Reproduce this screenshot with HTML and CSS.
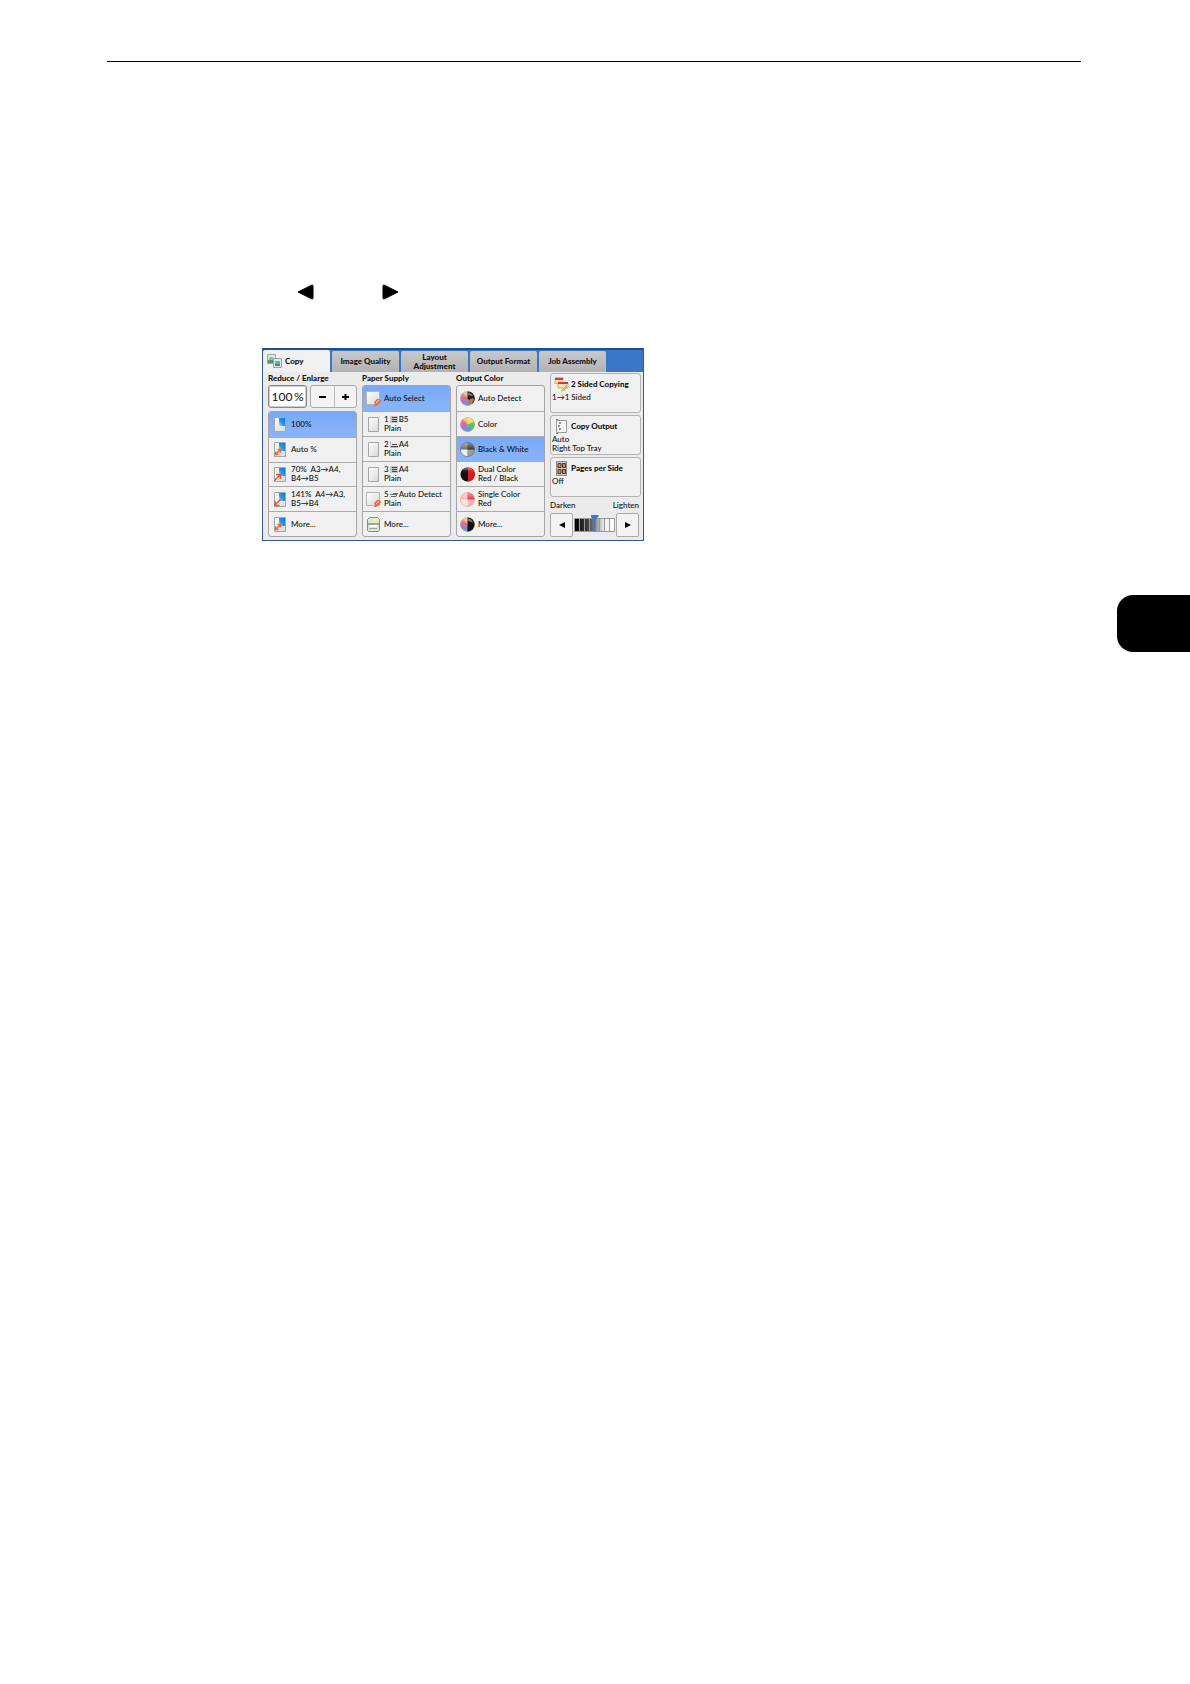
FILE: index.html
```html
<!DOCTYPE html>
<html lang="en">
<head>
<meta charset="utf-8">
<meta name="viewport" content="width=device-width, initial-scale=1">
<title>Copy</title>
<link rel="stylesheet" href="styles.css">
</head>
<body>
<svg class="defs" aria-hidden="true">
  <defs>
    <linearGradient id="blue" x1="1" y1="0" x2="0" y2="1"><stop offset="0" stop-color="#0877cf"/><stop offset=".6" stop-color="#2b9ae8"/><stop offset="1" stop-color="#cfeafc"/></linearGradient>
    <linearGradient id="sheet" x1="0" y1="0" x2="1" y2="1"><stop offset="0" stop-color="#fff"/><stop offset="1" stop-color="#d9d9d9"/></linearGradient>
    <linearGradient id="shine" x1="0" y1="0" x2="0" y2="1"><stop offset="0" stop-color="#fff" stop-opacity=".5"/><stop offset=".5" stop-color="#fff" stop-opacity=".05"/><stop offset="1" stop-color="#fff" stop-opacity="0"/></linearGradient>
    <symbol id="page" viewBox="0 0 12 15"><path d="M.5.5h11v14H.5z" fill="url(#sheet)" stroke="#a3a7aa"/><path d="M5 1h6v8H5z" fill="url(#blue)"/></symbol>
    <symbol id="scale" viewBox="0 0 12 15"><use href="#page"/><path d="M2 12l4-4M3.500 7.500h3v3M1.500 9.500v3h3" fill="none" stroke="#ee6435" stroke-width="1.500"/></symbol>
    <symbol id="reduce" viewBox="0 0 12 15"><use href="#page"/><path d="M0 14l6-6M2 7.500h4.500V12" fill="none" stroke="#ee5435" stroke-width="1.500"/></symbol>
    <symbol id="enlarge" viewBox="0 0 12 15"><use href="#page"/><path d="M7 7l-6 6M1 9v4.500h4.500" fill="none" stroke="#ee5435" stroke-width="1.500"/></symbol>
    <symbol id="blank" viewBox="0 0 15 15"><path d="M2.500.5h10v14h-10z" fill="url(#sheet)" stroke="#a3a7aa"/></symbol>
    <symbol id="autopaper" viewBox="0 0 15 15"><path d="M.5.5h13v13H.5z" fill="url(#sheet)" stroke="#b5b5b5"/><path d="M8 11l3-3h3l1 2-2 3-3 2H8l1-2z" fill="#ef6a42"/><path d="M10 12l3-3" stroke="#ffd6c4" fill="none"/></symbol>
    <symbol id="trays" viewBox="0 0 15 15"><path d="M1.500 2.500l2-2h8l2 2v11l-1 1h-10l-1-1z" fill="#dce6d7" stroke="#819084"/><path d="M7 1h5v5H7z" fill="#f2edac"/><path d="M2 6h11v2H2zM3 11h8v1H3z" fill="#93ac9c"/><path d="M4 8h7v2H4z" fill="#fff"/></symbol>
    <symbol id="wheel" viewBox="0 0 15 15"><circle cx="7.500" cy="7.500" r="7" fill="#f3a63a"/><path d="M7.500 7.500V.5A7 7 0 0 1 14 5z" fill="#e7d23a"/><path d="M7.500 7.500L14 5a7 7 0 0 1-2 8z" fill="#52c35a"/><path d="M7.500 7.500L12 13a7 7 0 0 1-8 .5z" fill="#4f9ee0"/><path d="M7.500 7.500L4 13.500A7 7 0 0 1 .5 7z" fill="#b26ad0"/><path d="M7.500 7.500L.5 7A7 7 0 0 1 3 2z" fill="#ee5560"/><circle cx="7.500" cy="7.500" r="7" fill="url(#shine)" stroke="#aaa" stroke-width=".5"/></symbol>
    <symbol id="wheelauto" viewBox="0 0 15 15"><use href="#wheel"/><path d="M7.500.5a7 7 0 0 1 5 12l-5-5z" fill="#17191b"/><path d="M8 12l2-4 3-1 1 2-2 3-3 2z" fill="#e96439"/><path d="M8 1.500c2 0 4 1 5 4L8 4z" fill="#777"/></symbol>
    <symbol id="wheelmore" viewBox="0 0 15 15"><use href="#wheel"/><path d="M7.500.5a7 7 0 0 1 0 14z" fill="#111"/><path d="M8 1.500c2 0 4 1 5 4L8 4z" fill="#777"/></symbol>
    <symbol id="mono" viewBox="0 0 15 15"><circle cx="7.500" cy="7.500" r="7" fill="#666"/><path d="M7.500 7.500h7a7 7 0 0 1-7 7z" fill="#999"/><path d="M7.500 7.500h-7a7 7 0 0 0 7 7z" fill="#eee"/><path d="M7.500.5v7h7a7 7 0 0 0-7-7z" fill="#292c2f"/><circle cx="7.500" cy="7.500" r="7" fill="url(#shine)" stroke="#666" stroke-width=".5"/></symbol>
    <symbol id="dual" viewBox="0 0 15 15"><circle cx="7.500" cy="7.500" r="7" fill="#101010"/><path d="M8 .5a7 7 0 0 1 0 14z" fill="#d91c20"/><ellipse cx="7.500" cy="4" rx="5" ry="3" fill="url(#shine)"/></symbol>
    <symbol id="single" viewBox="0 0 15 15"><circle cx="7.500" cy="7.500" r="7" fill="#f5b4b4"/><path d="M7.500 7.500V.5a7 7 0 0 1 7 7z" fill="#df3338"/><path d="M.5 7.500h7v7a7 7 0 0 1-7-7z" fill="#fbe5e5"/><circle cx="7.500" cy="7.500" r="7" fill="url(#shine)" stroke="#d88" stroke-width=".5"/></symbol>
    <symbol id="tall" viewBox="0 0 8 7"><path d="M0 0h8v7H0z" fill="#c4c4c4"/><path d="M2 1.500h5M2 3.500h5M2 5.500h5" stroke="#444"/></symbol>
    <symbol id="wide" viewBox="0 0 8 7"><path d="M.5 0v6.500H8" fill="none" stroke="#bbb"/><path d="M2 3.500h5M1 5.500h7" stroke="#444"/></symbol>
    <symbol id="bypass" viewBox="0 0 8 7"><path d="M3 2.500h5M1 5.500h5l1-2H3M0 3.500h3" fill="none" stroke="#666"/></symbol>
  </defs>
</svg>

<header class="page-head"><hr class="rule"></header>
<main class="content">
  <div class="arrows">
    <svg width="17" height="16" viewBox="0 0 17 16" role="img" aria-label="Previous"><path d="M1 8L15 1Q16 1 16 2v12q0 1-1 1z" stroke="#000"/></svg>
    <svg width="17" height="16" viewBox="0 0 17 16" role="img" aria-label="Next"><path d="M16 8L2 1Q1 1 1 2v12q0 1 1 1z" stroke="#000"/></svg>
  </div>

  <section class="panel">
    <nav class="tabs">
      <button class="tab tab-on"><svg width="15" height="14" viewBox="0 0 15 14" aria-hidden="true"><path d="M.5.500h8v9h-8z" fill="#dfe7df" stroke="#9aaa9e"/><path d="M1 6h7v3H1z" fill="#58985e"/><path d="M2 3h4v3H2z" fill="#8fb9c8"/><path d="M6.500 4.500h8v9h-8z" fill="#e2eaf0" stroke="#88a1a1"/><path d="M8 7h5v5H8z" fill="#69a7cf"/><path d="M8 10h5v2H8z" fill="#4b8d47"/></svg>Copy</button>
      <button class="tab">Image Quality</button>
      <button class="tab">Layout<br>Adjustment</button>
      <button class="tab">Output Format</button>
      <button class="tab">Job Assembly</button>
    </nav>

    <div class="body">
      <section class="col">
        <h2><label for="ratio">Reduce / Enlarge</label></h2>
        <div class="zoomer">
          <input id="ratio" class="ratio" type="text" value="100&#8201;%">
          <div class="stepper"><button aria-label="Less"><svg width="7" height="8" viewBox="0 0 7 8"><path d="M0 4h7" stroke="#000" stroke-width="2"/></svg></button><button aria-label="More"><svg width="7" height="8" viewBox="0 0 7 8"><path d="M0 4h7M3.500 1v6" stroke="#000" stroke-width="2"/></svg></button></div>
        </div>
        <div class="list">
          <button class="opt narrow on" aria-pressed="true"><svg><use href="#page"/></svg><span>100%</span></button>
          <button class="opt narrow"><svg><use href="#scale"/></svg><span>Auto %</span></button>
          <button class="opt narrow"><svg><use href="#reduce"/></svg><span>70%&nbsp; A3→A4,<br>B4→B5</span></button>
          <button class="opt narrow"><svg><use href="#enlarge"/></svg><span>141%&nbsp; A4→A3,<br>B5→B4</span></button>
          <button class="opt narrow"><svg><use href="#scale"/></svg><span>More...</span></button>
        </div>
      </section>

      <section class="col">
        <h2>Paper Supply</h2>
        <div class="list">
          <button class="opt on" aria-pressed="true"><svg><use href="#autopaper"/></svg><span>Auto Select</span></button>
          <button class="opt"><svg><use href="#blank"/></svg><span>1<svg class="tray"><use href="#tall"/></svg>B5<br>Plain</span></button>
          <button class="opt"><svg><use href="#blank"/></svg><span>2<svg class="tray"><use href="#wide"/></svg>A4<br>Plain</span></button>
          <button class="opt"><svg><use href="#blank"/></svg><span>3<svg class="tray"><use href="#tall"/></svg>A4<br>Plain</span></button>
          <button class="opt"><svg><use href="#autopaper"/></svg><span>5<svg class="tray"><use href="#bypass"/></svg>Auto Detect<br>Plain</span></button>
          <button class="opt"><svg><use href="#trays"/></svg><span>More...</span></button>
        </div>
      </section>

      <section class="col">
        <h2>Output Color</h2>
        <div class="list">
          <button class="opt"><svg><use href="#wheelauto"/></svg><span>Auto Detect</span></button>
          <button class="opt"><svg><use href="#wheel"/></svg><span>Color</span></button>
          <button class="opt on" aria-pressed="true"><svg><use href="#mono"/></svg><span>Black &amp; White</span></button>
          <button class="opt"><svg><use href="#dual"/></svg><span>Dual Color<br>Red / Black</span></button>
          <button class="opt"><svg><use href="#single"/></svg><span>Single Color<br>Red</span></button>
          <button class="opt"><svg><use href="#wheelmore"/></svg><span>More...</span></button>
        </div>
      </section>

      <section class="col side">
        <button class="card"><span class="card-title"><svg width="15" height="15" viewBox="0 0 15 15"><path d="M1 .500h8v6H1z" fill="#f2dfb3" stroke="#c9ba9b"/><path d="M1 1h8v2H1z" fill="#d73b35"/><path d="M4 6h10v5H4z" fill="#f6e6bd" stroke="#c5aa89"/><path d="M4 5h10v2H4z" fill="#d33b35"/><path d="M7 14l6-6-2 5z" fill="#e6cb42" stroke="#b6963e" stroke-width=".5"/></svg>2 Sided Copying</span><span class="card-text">1→1 Sided</span></button>
        <button class="card"><span class="card-title"><svg width="15" height="15" viewBox="0 0 15 15"><path d="M2.500 1.500h10v12h-10z" fill="#f4f4f4" stroke="#999"/><path d="M2 .5h2M2 14.500h2" stroke="#777"/><path d="M5 4h2M4 7h2M5 10h2" stroke="#333"/></svg>Copy Output</span><span class="card-text">Auto<br>Right Top Tray</span></button>
        <button class="card"><span class="card-title"><svg width="15" height="15" viewBox="0 0 15 15"><path d="M2.500.500h10v14h-10z" fill="#c8c8c8" stroke="#8a8a8a"/><path d="M4 2.500h3v4H4zM8.500 2.500h3v4h-3zM4 8.500h3v4H4zM8.500 8.500h3v4h-3z" fill="#d08a52" stroke="#443d39"/></svg>Pages per Side</span><span class="card-text">Off</span></button>
        <label class="ends" for="density"><span>Darken</span><span>Lighten</span></label>
        <div class="density">
          <button aria-label="Darken"><svg width="6" height="6" viewBox="0 0 6 6"><path d="M0 3l6-3v6z"/></svg></button>
          <input id="density" type="range" min="0" max="6" value="3">
          <button aria-label="Lighten"><svg width="6" height="6" viewBox="0 0 6 6"><path d="M6 3L0 0v6z"/></svg></button>
        </div>
      </section>
    </div>
  </section>
</main>
<aside class="thumb-tab" aria-label="Chapter"></aside>
</body>
</html>
```
FILE: styles.css
```css
* { box-sizing: border-box; }

body {
  margin: 0;
  min-height: 100vh;
  background: #fff;
  color: #111;
  font: 8px/9px Lato, "Open Sans", sans-serif;
}

.defs { position: absolute; width: 0; height: 0; }

button, input { font: inherit; color: inherit; margin: 0; padding: 0; border: 0; background: none; }
svg { flex: none; }

.page-head { padding: 61px 109px 0 107px; }
.rule { margin: 0; border: 0; height: 1px; background: #000; }

.content { padding: 222px 16px 0 262px; }
.arrows { display: flex; gap: 68px; padding-left: 35px; margin-bottom: 48px; }

.panel {
  max-width: 382px;
  border: 1px solid #35578f;
  border-top: 2px solid #254b8d;
  background: #3b76c8;
}

.tabs { display: grid; grid-template-columns: repeat(5, 67px); gap: 2px; height: 22px; }
.tab {
  display: flex;
  align-items: center;
  justify-content: center;
  gap: 2px;
  margin-top: 1px;
  border-radius: 2px 2px 0 0;
  background: linear-gradient(#c9c9c9, #b2b2b2);
  font-weight: 900;
}
.tab-on { justify-content: flex-start; gap: 3px; margin-top: 0; padding-left: 4px; background: #f1f1f1; }

.body {
  display: grid;
  grid-template-columns: repeat(3, 89px) minmax(0, 1fr);
  gap: 5px;
  padding: 1px 2px 3px 5px;
  background: #ebebeb;
}
.col { display: flex; flex-direction: column; height: 164px; }
h2 { margin: 0; height: 12px; font-size: 8px; line-height: 11px; font-weight: 900; white-space: nowrap; }

.zoomer { display: flex; justify-content: space-between; height: 23px; margin-bottom: 3px; }
.ratio {
  width: 39px;
  border: 1px solid #888;
  border-radius: 3px;
  box-shadow: inset 0 0 0 1px #ccc;
  background: #fff;
  font-size: 12px;
  text-align: center;
}
.stepper { display: grid; grid-template-columns: 1fr 1fr; width: 47px; border: 1px solid #aaa; border-radius: 3px; background: #f3f3f3; }
.stepper button { display: grid; place-items: center; }
.stepper button + button { border-left: 1px solid #bbb; }

.list {
  flex: 1;
  display: grid;
  grid-auto-rows: 1fr;
  border: 1px solid #a5a5a5;
  border-radius: 3px;
  overflow: hidden;
  background: #f0f0f0;
}
.opt { display: flex; align-items: center; gap: 3px; padding-left: 3px; text-align: left; white-space: nowrap; min-height: 0; font-weight: 500; }
.opt + .opt { border-top: 1px solid #aaa; }
.opt > svg { width: 15px; height: 15px; }
.narrow { gap: 5px; padding-left: 5px; }
.narrow > svg { width: 12px; }
.on { background: linear-gradient(#78a9f8, #8bb5f8); }
.tray { width: 8px; height: 7px; margin: 0 1px; vertical-align: -1px; }

.side { gap: 2px; }
.card {
  flex: 1;
  display: flex;
  flex-direction: column;
  padding: 2px 0 0 1px;
  border: 1px solid #b2b2b2;
  border-radius: 3px;
  background: #f0f0f0;
  text-align: left;
  white-space: nowrap;
}
.card-title { display: flex; align-items: center; gap: 2px; padding-left: 2px; font-weight: 900; height: 16px; }
.card-text { padding-top: 1px; font-weight: 500; }
.ends { display: flex; justify-content: space-between; padding-right: 2px; line-height: 12px; font-weight: 500; }
.density { display: flex; align-items: center; gap: 1px; padding-right: 2px; }
.density button { display: grid; place-items: center; width: 23px; height: 24px; border: 1px solid #aaa; border-radius: 2px; background: #f3f3f3; }
.density input {
  appearance: none;
  flex: 1;
  min-width: 0;
  height: 14px;
  border: 1px solid #999;
  background:
    repeating-linear-gradient(90deg, transparent 0 4px, #999 4px 5px),
    linear-gradient(90deg, #000, #444 35%, #eee 75%, #fff);
}
.density input::-webkit-slider-thumb {
  appearance: none;
  width: 8px;
  height: 17px;
  margin-top: -4px;
  background: #3f75cc;
  clip-path: polygon(0 0, 100% 0, 100% 2px, 5px 5px, 5px 100%, 3px 100%, 3px 5px, 0 2px);
}

.thumb-tab { width: 73px; height: 57px; margin: 54px 0 0 auto; border-radius: 16px 0 0 16px; background: #000; }
```
